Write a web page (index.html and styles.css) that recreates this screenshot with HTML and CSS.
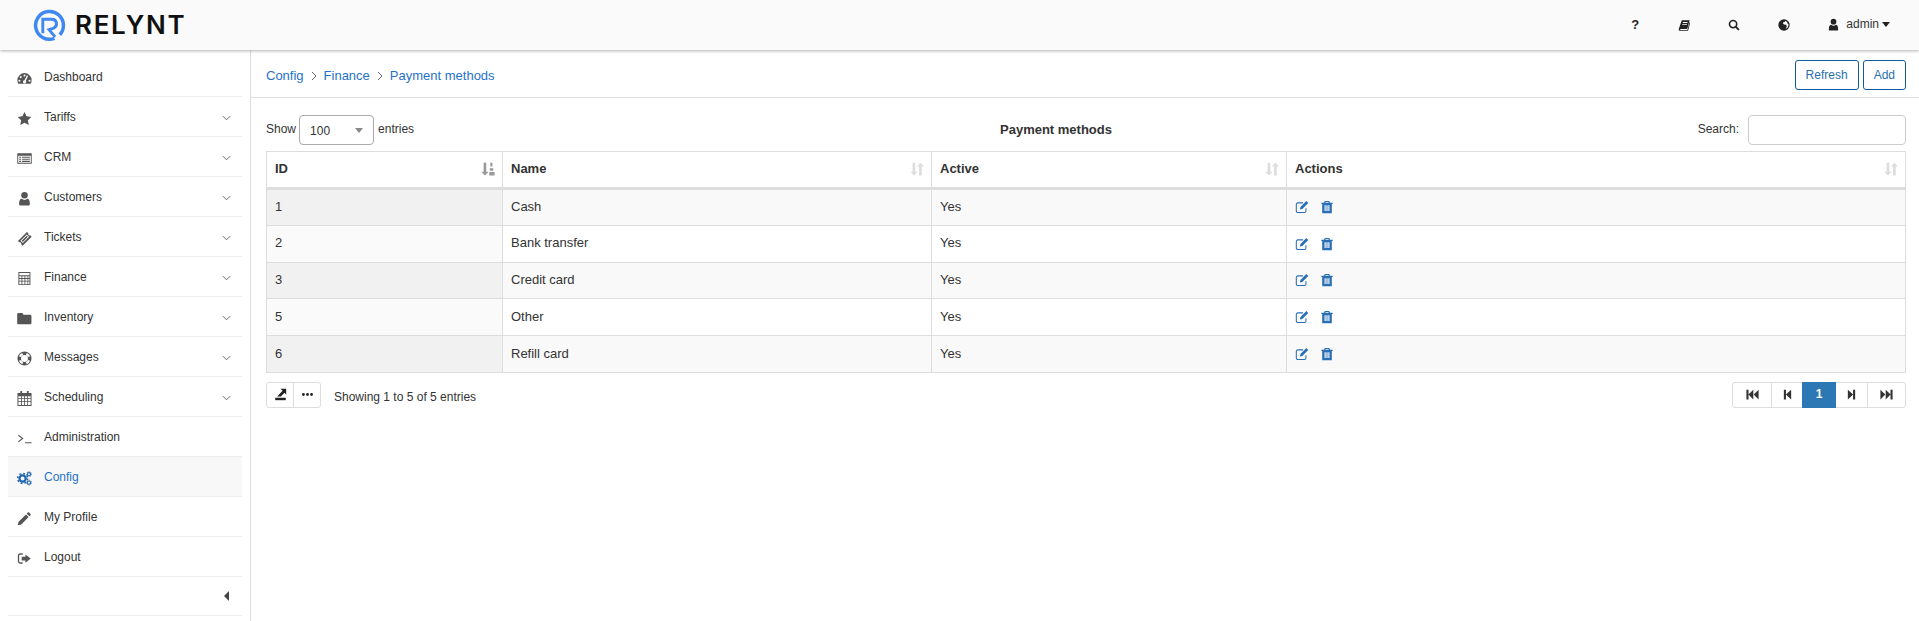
FILE: index.html
```html
<!DOCTYPE html>
<html lang="en">
<head>
  <meta charset="UTF-8">
  <meta name="viewport" content="width=device-width, initial-scale=1.0">
  <title>Payment methods</title>
  <link rel="stylesheet" href="styles.css">
</head>
<body>
  <svg class="defs" width="0" height="0">
    <symbol id="i-gauge" viewBox="0 0 16 16"><path fill-rule="evenodd" d="M8 2.200A7.600 7.600 0 0 0 .4 9.800c0 1.400.4 2.700 1 3.900h13.200c.6-1.200 1-2.500 1-3.900A7.600 7.600 0 0 0 8 2.200zM8 3.600a1.100 1.100 0 1 1 0 2.200 1.100 1.100 0 0 1 0-2.200zM4 5.400a1.100 1.100 0 1 1 0 2.200 1.100 1.100 0 0 1 0-2.200zM2.600 9.200a1.100 1.100 0 1 1 0 2.200 1.100 1.100 0 0 1 0-2.200zM13.400 9.200a1.100 1.100 0 1 1 0 2.200 1.100 1.100 0 0 1 0-2.200zM11.800 5.200 9.400 10.400a1.700 1.700 0 1 1-1.400-.6l2.600-5.200z"/></symbol>
    <symbol id="i-star" viewBox="0 0 16 16"><path d="M8 1l2.200 4.600 5 .7-3.600 3.500.9 5L8 12.400l-4.500 2.400.9-5L.8 6.300l5-.7z"/></symbol>
    <symbol id="i-list" viewBox="0 0 16 16"><path fill-rule="evenodd" d="M.3 2.500h15.400v11H.3zM1.300 5v7.500h13.400V5zM2.300 6h2v1.200h-2zM5.300 6h8.400v1.200H5.300zM2.300 8.200h2v1.200h-2zM5.300 8.200h8.400v1.200H5.300zM2.300 10.400h2v1.200h-2zM5.300 10.400h8.400v1.200H5.300z"/></symbol>
    <symbol id="i-user" viewBox="0 0 16 16"><circle cx="8" cy="4.500" r="3.500"/><path d="M3.600 15.500c-.8 0-1.300-.6-1.300-1.400 0-3 .5-5.800 2.700-5.800 1 .8 1.900 1.200 3 1.200s2-.4 3-1.200c2.200 0 2.700 2.800 2.700 5.800 0 .8-.5 1.400-1.300 1.400z"/></symbol>
    <symbol id="i-ticket" viewBox="0 0 16 16"><path fill-rule="evenodd" d="M10.600 1l1.500 1.500a1.500 1.500 0 0 0 2 2L15.600 6 6 15.600l-1.500-1.500a1.500 1.500 0 0 0-2-2L1 10.600zM10.400 3.700 3.700 10.400l2.500 2.500 6.700-6.700z"/><path d="M10.400 5 11.600 6.200 6.200 11.600 5 10.400z"/></symbol>
    <symbol id="i-calc" viewBox="0 0 16 16"><path fill-rule="evenodd" d="M1.500 1h12.800v14H1.500zM2.500 2v2.500h10.800V2zM2.500 5.500v2h2.300v-2zM5.700 5.500v2h2.300v-2zM8.900 5.500v2h2.300v-2zM12 5.500v2h1.300v-2zM2.500 8.400v2h2.300v-2zM5.700 8.400v2h2.300v-2zM8.900 8.400v2h2.300v-2zM12 8.400v2h1.300v-2zM2.500 11.300V14h2.300v-2.700zM5.700 11.300V14h2.300v-2.700zM8.900 11.300V14h2.300v-2.700zM12 11.300V14h1.300v-2.700z"/></symbol>
    <symbol id="i-folder" viewBox="0 0 16 16"><path d="M1.600 2.200h3.600c.8 0 1.400.6 1.500 1.500l.1.300h7.100c.8 0 1.500.7 1.500 1.500v7.200c0 .8-.7 1.500-1.500 1.500H1.600C.8 14.200.2 13.500.2 12.700V3.700c0-.8.600-1.500 1.400-1.500z"/></symbol>
    <symbol id="i-buoy" viewBox="0 0 16 16"><path fill-rule="evenodd" d="M8 .5a7.500 7.500 0 1 1 0 15 7.500 7.500 0 0 1 0-15zM8 4.300a3.700 3.700 0 1 0 0 7.400 3.700 3.700 0 0 0 0-7.400zM5.600 2a6.400 6.400 0 0 0-3.600 3.600l2.100.9a4.200 4.200 0 0 1 2.400-2.400zM10.400 2l-.9 2.100a4.200 4.200 0 0 1 2.400 2.400L14 5.600A6.400 6.400 0 0 0 10.400 2zM2 10.400A6.400 6.400 0 0 0 5.600 14l.9-2.100a4.200 4.200 0 0 1-2.400-2.400zM14 10.400l-2.100-.9a4.200 4.200 0 0 1-2.400 2.400l.9 2.100a6.400 6.400 0 0 0 3.600-3.600z"/></symbol>
    <symbol id="i-cal" viewBox="0 0 16 16"><path fill-rule="evenodd" d="M3.500 0h2v2h5V0h2v2h3v14H.5V2h3zM1.500 5.500v2.200h2.800V5.500zM5.200 5.500v2.200h2.400V5.500zM8.500 5.500v2.200h2.400V5.500zM11.800 5.500v2.200h2.700V5.500zM1.500 8.600v2.200h2.800V8.600zM5.200 8.600v2.200h2.400V8.600zM8.500 8.600v2.200h2.400V8.600zM11.800 8.600v2.200h2.700V8.600zM1.500 11.700V15h2.800v-3.300zM5.200 11.700V15h2.400v-3.300zM8.500 11.700V15h2.400v-3.300zM11.800 11.700V15h2.700v-3.300z"/></symbol>
    <symbol id="i-term" viewBox="0 0 16 16"><path d="M1.500 4.500 6 8l-4.500 3.500M8.500 12.500h7" fill="none" stroke="currentColor" stroke-width="1.100"/></symbol>
    <symbol id="i-cogs" viewBox="0 0 16 16"><circle cx="6" cy="8" r="3.300" fill="none" stroke="currentColor" stroke-width="2.400"/><circle cx="6" cy="8" r="5.300" fill="none" stroke="currentColor" stroke-width="1.600" stroke-dasharray="2 2.160"/><circle cx="12.800" cy="3.400" r="1.700" fill="none" stroke="currentColor" stroke-width="1.200"/><circle cx="12.800" cy="3.400" r="2.700" fill="none" stroke="currentColor" stroke-width=".9" stroke-dasharray="1.200 1.200"/><circle cx="12.800" cy="12.400" r="1.700" fill="none" stroke="currentColor" stroke-width="1.200"/><circle cx="12.800" cy="12.400" r="2.700" fill="none" stroke="currentColor" stroke-width=".9" stroke-dasharray="1.200 1.200"/></symbol>
    <symbol id="i-pencil" viewBox="0 0 16 16"><path d="M11.500 1.600c.4-.4 1-.4 1.400 0l1.500 1.500c.4.400.4 1 0 1.400l-1.200 1.200-2.900-2.900zM9.500 3.600l2.900 2.900-7.800 7.800-3.900 1 1-3.900z"/></symbol>
    <symbol id="i-out" viewBox="0 0 16 16"><path d="M6 3.200H3.400c-1 0-1.800.8-1.800 1.800v6c0 1 .8 1.800 1.800 1.800H6" fill="none" stroke="currentColor" stroke-width="1.400"/><path d="M9 3.600 14.600 8 9 12.400V10H5V6h4z"/></symbol>
    <symbol id="i-chev" viewBox="0 0 10 6"><path d="M1 1l4 4 4-4" fill="none" stroke="currentColor" stroke-width="1"/></symbol>
    <symbol id="i-book" viewBox="0 0 16 16"><path fill-rule="evenodd" d="M5 1.500h10.500l-2.800 10.700c-.2.700-.8 1-1.500 1H3.600c-.6 0-.9.400-.8.800.1.300.4.500.8.500h8.400c.4 0 .7-.2.8-.6l2.600-9.600.9.500-2.600 9.700c-.2.800-.9 1.300-1.700 1.300H3.200C1.700 15.800.8 14.600 1 13.200zM6.600 4l-.3 1.200h6.200l.3-1.200zM5.900 6.500l-.3 1.200h6.200l.3-1.200z"/></symbol>
    <symbol id="i-search" viewBox="0 0 16 16"><circle cx="6.800" cy="6.800" r="4.800" fill="none" stroke="currentColor" stroke-width="2.200"/><path d="M10.200 10.200l4.300 4.300" stroke="currentColor" stroke-width="2.600"/></symbol>
    <symbol id="i-globe" viewBox="0 0 16 16"><path fill-rule="evenodd" d="M8 .4a7.600 7.600 0 1 1 0 15.200A7.600 7.600 0 0 1 8 .4zM9.800 2.400 8.800 4 7.200 4.200 6.400 5.600l1.600 1.600 2.800.3 1 2.400-1.600 3.200c1.300-.5 2.600-1.500 3.200-2.800.6-1.200.7-2.400.5-3.600l-1.200-.4-.2-1.600c-.7-.9-1.600-1.600-2.700-2z"/></symbol>
    <symbol id="i-sortnum" viewBox="0 0 16 16"><path d="M3 .8h3v10.200h2.600L4.500 15.400.4 11H3z"/><path d="M10.600 .8h2.400v4.400h-2.400zM10 7h4v3h-4zM9.500 11.500h6v3.900h-6z"/></symbol>
    <symbol id="i-sort" viewBox="0 0 16 16"><path d="M3 .8h3v10.200h2.600L4.500 15.400.4 11H3zM10.400 15.400h3V5.200H16L11.900.8 7.800 5.200h2.600z"/></symbol>
    <symbol id="i-edit" viewBox="0 0 16 16"><path d="M12.500 9.500v3c0 1-.7 1.700-1.700 1.700H3.200c-1 0-1.700-.7-1.700-1.700V5c0-1 .7-1.700 1.700-1.700h6" fill="none" stroke="currentColor" stroke-width="1.200"/><path d="M13 1.200l2.200 2.100-6.800 6.900-2.800.7.600-2.800z"/></symbol>
    <symbol id="i-trash" viewBox="0 0 16 16"><path fill-rule="evenodd" d="M5.500 1h5l1 2h3v1.600h-1V15H2.500V4.600h-1V3h3zM6.500 2.300 6 3h4l-.5-.7zM5.200 6v6.500h1.300V6zM7.350 6v6.500h1.300V6zM9.500 6v6.500h1.300V6z"/></symbol>
    <symbol id="i-export" viewBox="0 0 16 16"><path d="M1.500 12h13v3h-13z"/><path d="M8 1h7v7l-2.200-2.200L8.500 10.500H4l6.500-7z"/></symbol>
    <symbol id="i-dots" viewBox="0 0 16 16"><circle cx="3" cy="8" r="1.700"/><circle cx="8" cy="8" r="1.700"/><circle cx="13" cy="8" r="1.700"/></symbol>
    <symbol id="i-first" viewBox="0 0 16 16"><path d="M.5 2h2.600v12H.5zM9 2v12L3 8zM15.500 2v12L9.500 8z"/></symbol>
    <symbol id="i-prev" viewBox="0 0 16 16"><path d="M3.500 2h2.600v12H3.500zM12.500 2v12L6 8z"/></symbol>
    <symbol id="i-next" viewBox="0 0 16 16"><path d="M12.500 2H9.900v12h2.600zM3.500 2v12L10 8z"/></symbol>
    <symbol id="i-last" viewBox="0 0 16 16"><path d="M15.500 2h-2.600v12h2.600zM7 2v12l6-6zM.5 2v12l6-6z"/></symbol>
  </svg>

  <header class="topbar">
    <div class="logo">
      <svg class="logo-mark" viewBox="0 0 32 32">
        <path d="M20.800 28.500A13.500 13.500 0 1 1 29.500 16c0 3.500-1.300 6.600-3.500 9" fill="none" stroke="#3f88f2" stroke-width="3.400"/>
        <path d="M9.500 23.500V10h9a4.400 4.400 0 0 1 1.500 8.500L15.500 20l6 7" fill="none" stroke="#3f88f2" stroke-width="2.800"/>
      </svg>
      <span class="logo-text">RELYNT</span>
    </div>
    <div class="top-tools">
      <span class="tool-help">?</span>
      <svg class="tool-icon"><use href="#i-book"/></svg>
      <svg class="tool-icon"><use href="#i-search"/></svg>
      <svg class="tool-icon tool-globe"><use href="#i-globe"/></svg>
      <span class="tool-user"><svg class="tool-icon"><use href="#i-user"/></svg>admin<span class="caret"></span></span>
    </div>
  </header>

  <div class="layout">
    <aside class="sidebar">
      <a class="menu-item"><svg class="menu-icon"><use href="#i-gauge"/></svg><span class="menu-label">Dashboard</span></a>
      <a class="menu-item"><svg class="menu-icon"><use href="#i-star"/></svg><span class="menu-label">Tariffs</span><svg class="chev"><use href="#i-chev"/></svg></a>
      <a class="menu-item"><svg class="menu-icon"><use href="#i-list"/></svg><span class="menu-label">CRM</span><svg class="chev"><use href="#i-chev"/></svg></a>
      <a class="menu-item"><svg class="menu-icon"><use href="#i-user"/></svg><span class="menu-label">Customers</span><svg class="chev"><use href="#i-chev"/></svg></a>
      <a class="menu-item"><svg class="menu-icon"><use href="#i-ticket"/></svg><span class="menu-label">Tickets</span><svg class="chev"><use href="#i-chev"/></svg></a>
      <a class="menu-item"><svg class="menu-icon"><use href="#i-calc"/></svg><span class="menu-label">Finance</span><svg class="chev"><use href="#i-chev"/></svg></a>
      <a class="menu-item"><svg class="menu-icon"><use href="#i-folder"/></svg><span class="menu-label">Inventory</span><svg class="chev"><use href="#i-chev"/></svg></a>
      <a class="menu-item"><svg class="menu-icon"><use href="#i-buoy"/></svg><span class="menu-label">Messages</span><svg class="chev"><use href="#i-chev"/></svg></a>
      <a class="menu-item"><svg class="menu-icon"><use href="#i-cal"/></svg><span class="menu-label">Scheduling</span><svg class="chev"><use href="#i-chev"/></svg></a>
      <a class="menu-item"><svg class="menu-icon"><use href="#i-term"/></svg><span class="menu-label">Administration</span></a>
      <a class="menu-item active"><svg class="menu-icon"><use href="#i-cogs"/></svg><span class="menu-label">Config</span></a>
      <a class="menu-item"><svg class="menu-icon"><use href="#i-pencil"/></svg><span class="menu-label">My Profile</span></a>
      <a class="menu-item"><svg class="menu-icon"><use href="#i-out"/></svg><span class="menu-label">Logout</span></a>
      <div class="collapse"><span class="collapse-arrow"></span></div>
    </aside>

    <main class="content">
      <div class="crumbs">
        <nav class="crumb-list">
          <a>Config</a>
          <svg class="crumb-sep" viewBox="0 0 6 10"><path d="M1 1l4 4-4 4" fill="none" stroke="currentColor"/></svg>
          <a>Finance</a>
          <svg class="crumb-sep" viewBox="0 0 6 10"><path d="M1 1l4 4-4 4" fill="none" stroke="currentColor"/></svg>
          <a>Payment methods</a>
        </nav>
        <div class="crumb-actions">
          <button class="btn">Refresh</button>
          <button class="btn">Add</button>
        </div>
      </div>

      <section class="panel">
        <div class="table-top">
          <label class="length">Show <span class="select">100<span class="select-arrow"></span></span> entries</label>
          <div class="table-title">Payment methods</div>
          <label class="search">Search: <input class="search-input" type="text"></label>
        </div>

        <table class="data">
          <colgroup>
            <col class="col-id"><col class="col-name"><col class="col-active"><col>
          </colgroup>
          <thead>
            <tr>
              <th>ID<svg class="sort sort-on"><use href="#i-sortnum"/></svg></th>
              <th>Name<svg class="sort"><use href="#i-sort"/></svg></th>
              <th>Active<svg class="sort"><use href="#i-sort"/></svg></th>
              <th>Actions<svg class="sort"><use href="#i-sort"/></svg></th>
            </tr>
          </thead>
          <tbody>
            <tr>
              <td>1</td><td>Cash</td><td>Yes</td>
              <td><span class="row-actions"><svg><use href="#i-edit"/></svg><svg><use href="#i-trash"/></svg></span></td>
            </tr>
            <tr>
              <td>2</td><td>Bank transfer</td><td>Yes</td>
              <td><span class="row-actions"><svg><use href="#i-edit"/></svg><svg><use href="#i-trash"/></svg></span></td>
            </tr>
            <tr>
              <td>3</td><td>Credit card</td><td>Yes</td>
              <td><span class="row-actions"><svg><use href="#i-edit"/></svg><svg><use href="#i-trash"/></svg></span></td>
            </tr>
            <tr>
              <td>5</td><td>Other</td><td>Yes</td>
              <td><span class="row-actions"><svg><use href="#i-edit"/></svg><svg><use href="#i-trash"/></svg></span></td>
            </tr>
            <tr>
              <td>6</td><td>Refill card</td><td>Yes</td>
              <td><span class="row-actions"><svg><use href="#i-edit"/></svg><svg><use href="#i-trash"/></svg></span></td>
            </tr>
          </tbody>
        </table>

        <div class="table-bottom">
          <div class="btn-group">
            <button class="tbl-btn"><svg><use href="#i-export"/></svg></button>
            <button class="tbl-btn"><svg><use href="#i-dots"/></svg></button>
          </div>
          <div class="info">Showing 1 to 5 of 5 entries</div>
          <div class="pager">
            <a class="page page-wide"><svg><use href="#i-first"/></svg></a>
            <a class="page"><svg><use href="#i-prev"/></svg></a>
            <a class="page current">1</a>
            <a class="page"><svg><use href="#i-next"/></svg></a>
            <a class="page page-wide"><svg><use href="#i-last"/></svg></a>
          </div>
        </div>
      </section>
    </main>
  </div>
</body>
</html>
```
FILE: styles.css
```css
* {
  box-sizing: border-box;
}

html,
body {
  height: 100%;
}

body {
  margin: 0;
  overflow: hidden;
  background: #fff;
  color: #333;
  font-family: "Liberation Sans", Arial, sans-serif;
  font-size: 12px;
  line-height: 1.42857;
}

.defs {
  position: absolute;
}

/* top bar */
.topbar {
  position: relative;
  z-index: 2;
  display: flex;
  align-items: center;
  justify-content: space-between;
  height: 50px;
  background: #fafafa;
  box-shadow: 0 1px 3px rgba(0, 0, 0, 0.3);
}

.logo {
  display: flex;
  align-items: center;
  padding-left: 33px;
}

.logo-mark {
  width: 33px;
  height: 33px;
}

.logo-text {
  margin-left: 9px;
  color: #111;
  font-family: Inter, "Liberation Sans", sans-serif;
  font-size: 26px;
  font-weight: 600;
  letter-spacing: 1.7px;
  line-height: 1;
}

.top-tools {
  display: flex;
  align-items: center;
  color: #222;
}

.tool-help {
  width: 14px;
  margin-right: 36px;
  font-weight: 700;
  font-size: 13px;
  text-align: center;
}

.tool-icon {
  width: 12px;
  height: 12px;
  margin-right: 38px;
  fill: currentColor;
  color: #222;
}

.tool-globe {
  margin-right: 37px;
}

.tool-user {
  display: flex;
  align-items: center;
  margin-right: 29px;
  color: #333;
}

.tool-user .tool-icon {
  width: 13px;
  height: 13px;
  margin-right: 6px;
}

.caret {
  margin-left: 3px;
  border-top: 5px solid #222;
  border-left: 4px solid transparent;
  border-right: 4px solid transparent;
}

/* layout */
.layout {
  display: flex;
  height: calc(100% - 50px);
}

.sidebar {
  flex: none;
  width: 251px;
  padding: 7px 8px 0;
  border-right: 1px solid #ddd;
}

.menu-item {
  display: flex;
  align-items: center;
  height: 40px;
  padding: 3px 11px 0 9px;
  border-bottom: 1px solid #eee;
  color: #333;
}

.menu-icon {
  flex: none;
  width: 15px;
  height: 15px;
  fill: #555;
  color: #555;
}

.menu-label {
  flex: 1;
  margin-left: 12px;
}

.chev {
  flex: none;
  width: 9px;
  height: 6px;
  color: #555;
}

.menu-item.active {
  background: #f8f8f8;
}

.menu-item.active .menu-label {
  color: #1f72c8;
}

.menu-item.active .menu-icon {
  fill: #1f66b0;
  color: #1f66b0;
}

.collapse {
  display: flex;
  align-items: center;
  justify-content: flex-end;
  height: 39px;
  padding-right: 13px;
  border-bottom: 1px solid #eee;
}

.collapse-arrow {
  border-right: 5px solid #444;
  border-top: 5px solid transparent;
  border-bottom: 5px solid transparent;
}

/* content */
.content {
  flex: 1;
  min-width: 0;
}

.crumbs {
  display: flex;
  align-items: center;
  justify-content: space-between;
  height: 48px;
  padding: 3px 13px 0 15px;
  border-bottom: 1px solid #ddd;
}

.crumb-list {
  display: flex;
  align-items: center;
  padding-top: 3px;
  color: #1f72c8;
  font-size: 13px;
}

.crumb-sep {
  width: 6px;
  height: 10px;
  margin: 0 7px 2px 7px;
  color: #666;
}

.crumb-actions {
  display: flex;
  gap: 4px;
}

.btn {
  height: 30px;
  padding: 0 10px;
  border: 1px solid #0f5c9c;
  border-radius: 3px;
  background: #fff;
  color: #2a70b0;
  font-family: inherit;
  font-size: 12px;
}

.panel {
  padding: 17px 13px 0 15px;
}

.table-top {
  display: grid;
  grid-template-columns: 582px 416px 1fr;
  align-items: center;
  height: 30px;
}

.length {
  display: flex;
  align-items: center;
  gap: 3px;
}

.select {
  position: relative;
  width: 75px;
  height: 30px;
  margin-right: 1px;
  padding: 7px 10px;
  border: 1px solid #aaa;
  border-radius: 4px;
}

.select-arrow {
  position: absolute;
  right: 10px;
  top: 12px;
  border-top: 5px solid #888;
  border-left: 4px solid transparent;
  border-right: 4px solid transparent;
}

.table-title {
  color: #333;
  font-size: 13px;
  font-weight: 700;
  text-align: center;
}

.search {
  display: flex;
  align-items: center;
  justify-content: flex-end;
  gap: 9px;
}

.search-input {
  width: 158px;
  height: 30px;
  border: 1px solid #ccc;
  border-radius: 4px;
}

.data {
  width: 1640px;
  margin-top: 6px;
  border-collapse: collapse;
  table-layout: fixed;
  font-size: 13px;
}

.col-id {
  width: 236px;
}

.col-name {
  width: 429px;
}

.col-active {
  width: 355px;
}

.data th,
.data td {
  padding: 0 8px;
  border: 1px solid #ddd;
  text-align: left;
}

.data th {
  position: relative;
  height: 37px;
  border-bottom-width: 3px;
  color: #333;
  font-weight: 700;
}

.data td {
  height: 36.8px;
}

.data tbody tr:nth-child(odd) td {
  background: #f9f9f9;
}

.data tbody tr:nth-child(odd) td:first-child {
  background: #f1f1f1;
}

.data tbody tr:nth-child(even) td:first-child {
  background: #fafafa;
}

.sort {
  position: absolute;
  right: 7px;
  top: 10px;
  width: 14px;
  height: 14px;
  fill: #ddd;
}

.sort-on {
  fill: #999;
}

.row-actions {
  display: flex;
  align-items: center;
  gap: 11px;
  color: #2a6fb5;
}

.row-actions svg {
  width: 14px;
  height: 14px;
  fill: currentColor;
}

.table-bottom {
  display: flex;
  align-items: center;
  height: 26px;
  margin-top: 9px;
}

.btn-group {
  display: flex;
  height: 26px;
}

.tbl-btn {
  display: flex;
  align-items: center;
  justify-content: center;
  width: 28px;
  padding: 0;
  border: 1px solid #ddd;
  border-radius: 3px 0 0 3px;
  background: #fff;
}

.tbl-btn + .tbl-btn {
  width: 28px;
  margin-left: -1px;
  border-radius: 0 3px 3px 0;
}

.tbl-btn svg {
  width: 13px;
  height: 13px;
  fill: #222;
}

.info {
  flex: 1;
  margin-left: 13px;
  padding-top: 5px;
}

.pager {
  display: flex;
  height: 26px;
  border: 1px solid #ddd;
  border-radius: 3px;
}

.page {
  display: flex;
  align-items: center;
  justify-content: center;
  width: 31px;
  border-left: 1px solid #ddd;
}

.page:first-child {
  border-left: 0;
}

.page svg {
  width: 13px;
  height: 13px;
  fill: #333;
}

.page-wide {
  width: 38px;
}

.page.current {
  width: 34px;
  margin: -1px 0;
  border: 0;
  background: #2b78b5;
  color: #fff;
  font-weight: 700;
}

.page.current + .page {
  border-left: 0;
}
```
